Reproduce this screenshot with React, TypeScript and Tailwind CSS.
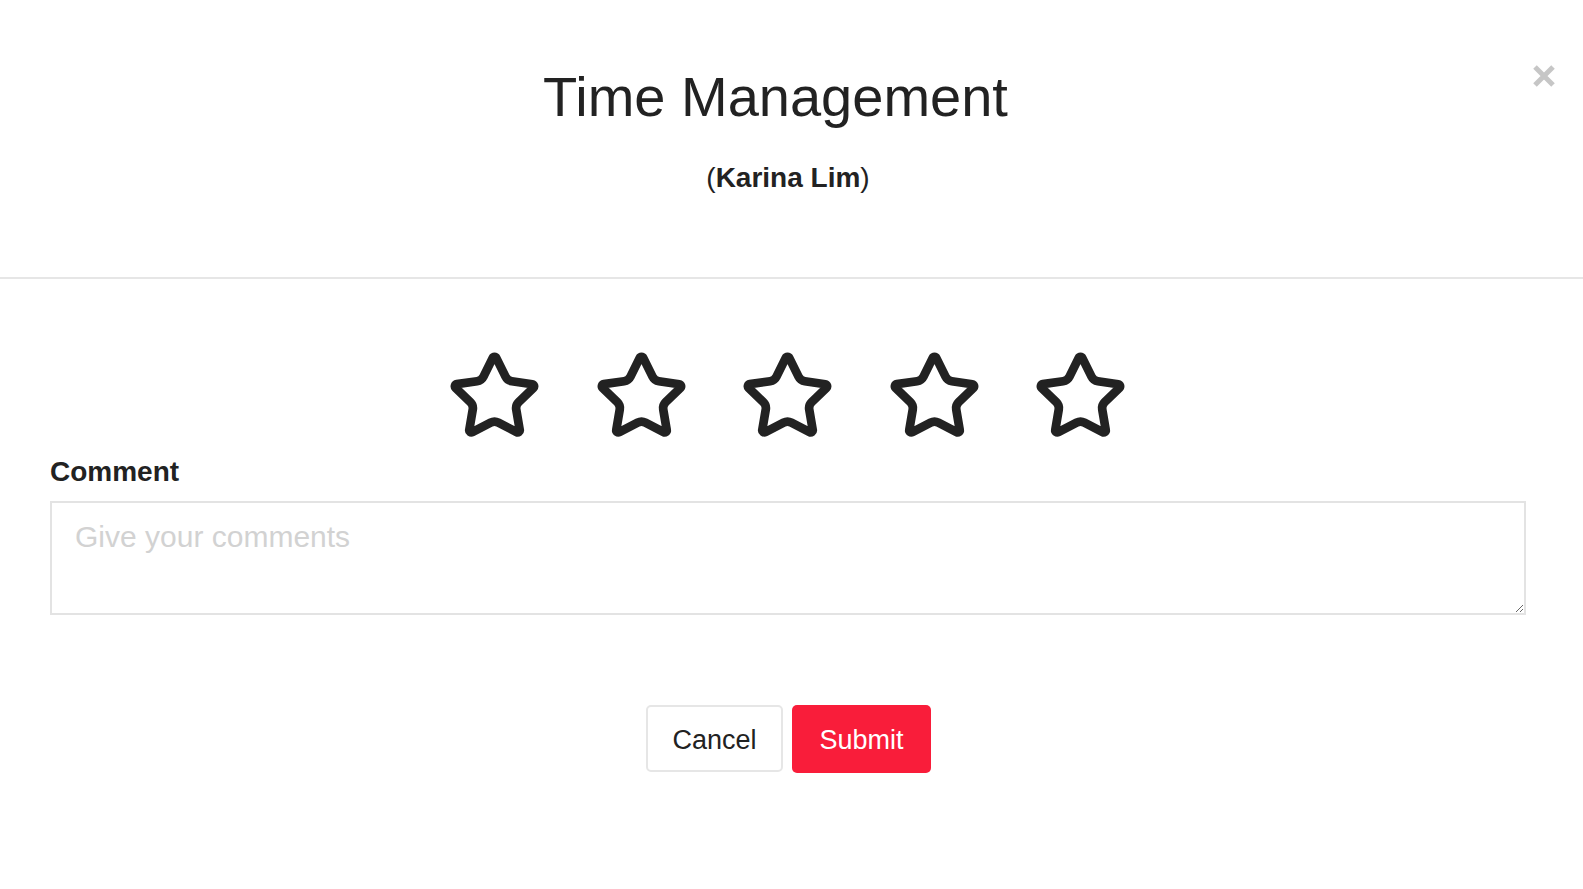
import React, { useState } from 'react';
import { Star } from 'lucide-react';

export default function App() {
  const [rating, setRating] = useState(0);
  const [comment, setComment] = useState('');

  return (
    <div className="relative min-h-screen bg-white text-[#222] font-['Liberation_Sans',Arial,sans-serif]">
      {/* Close */}
      <button className="absolute right-[28px] top-[65px] p-0" aria-label="Close">
        <svg width="22" height="22" viewBox="0 0 22 22">
          <path d="M2 2 L20 20 M20 2 L2 20" stroke="#c6c6c6" strokeWidth="5" />
        </svg>
      </button>

      {/* Header */}
      <header className="flex h-[277px] flex-col items-center pt-[65px]">
        <h1 className="pr-[32px] text-[56px] font-normal leading-[64px]">Time Management</h1>
        <p className="mt-[33px] pr-[7px] text-[28px] leading-[32px]">
          (<b className="font-bold">Karina Lim</b>)
        </p>
      </header>
      <div className="h-[2px] bg-[#e6e6e6]" />

      {/* Rating */}
      <div className="flex justify-center gap-[51.5px] pr-[8px] pt-[70px]">
        {[1, 2, 3, 4, 5].map((n) => (
          <button key={n} onClick={() => setRating(n)} className="p-0">
            <Star
              size={95}
              strokeWidth={2.2}
              color="#222222"
              fill={n <= rating ? '#222222' : 'none'}
            />
          </button>
        ))}
      </div>

      {/* Comment */}
      <div className="pl-[50px] pr-[57px] pt-[12px]">
        <label className="block text-[28px] font-bold leading-[32px]">Comment</label>
        <textarea
          value={comment}
          onChange={(e) => setComment(e.target.value)}
          placeholder="Give your comments"
          className="mt-[13px] block h-[114px] w-full border-2 border-[#e3e3e3] px-[23px] pt-[16px] text-[30px] leading-[36px] outline-none placeholder:text-[#d2d2d2]"
        />
      </div>

      {/* Actions */}
      <div className="mt-[90px] flex justify-center gap-[9px] pr-[6px]">
        <button className="h-[67px] w-[137px] rounded-[5px] border-2 border-[#e6e6e6] bg-white pt-[3px] text-[27px] text-[#222]">
          Cancel
        </button>
        <button className="h-[68px] w-[139px] rounded-[5px] bg-[#f91d3a] pt-[2px] text-[27px] text-white">
          Submit
        </button>
      </div>
    </div>
  );
}
